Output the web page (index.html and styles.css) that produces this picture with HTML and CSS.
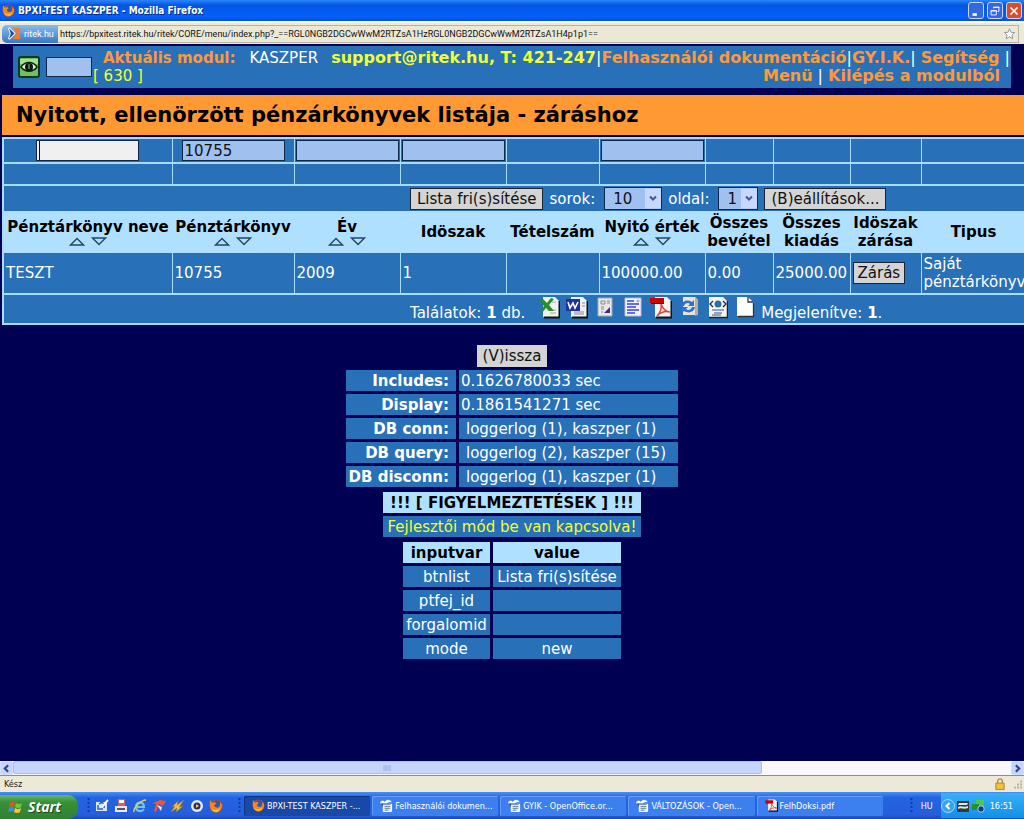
FILE: index.html
```html
<!DOCTYPE html>
<html lang="hu">
<head>
<meta charset="utf-8">
<title>BPXI-TEST KASZPER - Mozilla Firefox</title>
<link rel="stylesheet" href="styles.css">
</head>
<body>
<svg class="defs" aria-hidden="true">
  <defs>
    <symbol id="fox" viewBox="0 0 14 14"><circle cx="7" cy="7" r="6.500" fill="#d8440c"/><circle cx="7.500" cy="5" r="3.800" fill="#3458a8"/><path d="M1 1l2 3 3-1 1 2-2 1 1 2 3 1 2-2V3l2 3c0 5-3 7.500-6 7.500S0 11 1 1z" fill="#f88818"/><path d="M2 9c2 3 6 3 9 0-1 3-3 4-5 3.500S2.500 11 2 9z" fill="#ffd040"/></symbol>
    <symbol id="office" viewBox="0 0 14 14"><path d="M0 4c2-2.500 4-2 5-.5 2-3 6-2.500 7-.5-2-.5-4 .5-5 1.500H4C3 4 1 4 0 4z" fill="#fff" stroke="#fff" stroke-width=".8"/><path d="M3.500 5.500h9v8h-9z" fill="#e8eef8" stroke="#fff"/><path d="M5 8h6M5 10h6M5 12h4" stroke="#507898"/><path d="M2.500 8V5.500h9" stroke="#304868" fill="none"/></symbol>
    <symbol id="pdf" viewBox="0 0 22 23"><path d="M5 1h12l4 4v16H5z" fill="#f4f4f0"/><path d="M6 21.500h15.500V5" stroke="#111" stroke-width="2" fill="none"/><path d="M0 2h14v5H0z" fill="#d00000"/><path d="M1 7h13v1H1z" fill="#400"/><path d="M11 8c2 5 5 8 9 8-4-1-9 0-13 4 3-3 5-7 4-12z" fill="none" stroke="#e04040" stroke-width="1.500"/></symbol>
    <symbol id="up" viewBox="0 0 16 9"><path d="M1.500 8L8 1.500 14.500 8z" fill="none" stroke="#204860" stroke-width="1.400"/></symbol>
    <symbol id="down" viewBox="0 0 16 9"><path d="M1.500 1h13L8 7.500z" fill="none" stroke="#204860" stroke-width="1.400"/></symbol>
  </defs>
</svg>

<header class="titlebar">
  <svg class="i14"><use href="#fox"/></svg>
  <span class="window-title">BPXI-TEST KASZPER - Mozilla Firefox</span>
  <button class="winbtn" aria-label="Minimize"><svg viewBox="0 0 16 16"><path d="M4 12h5" stroke="#fff" stroke-width="3"/></svg></button>
  <button class="winbtn" aria-label="Restore"><svg viewBox="0 0 16 16"><path d="M6.500 5V3.500h6v5H11M6 4h7M3.500 7.500h6v5h-6zM3 8h7" stroke="#fff" fill="none"/></svg></button>
  <button class="winbtn close" aria-label="Close"><svg viewBox="0 0 16 16"><path d="M4 4l8 8M12 4l-8 8" stroke="#fff" stroke-width="2"/></svg></button>
</header>

<div class="urlbar">
  <span class="site"><svg class="i14" viewBox="0 0 14 14"><path d="M1 1l6 6-6 6 2-6z" fill="#fff" stroke="#fff" stroke-width="2"/><path d="M1 1l6 6-6 6 2-6z" fill="#284888"/><path d="M5 1h8v12H5l5-6z" fill="#f87828"/></svg>ritek.hu</span>
  <input class="url" aria-label="URL" value="https://bpxitest.ritek.hu/ritek/CORE/menu/index.php?_==RGL0NGB2DGCwWwM2RTZsA1HzRGL0NGB2DGCwWwM2RTZsA1H4p1p1==">
  <svg class="star" viewBox="0 0 14 14"><path d="M7 1l1.800 4 4.200.3-3.200 2.900 1 4.300L7 10.200l-3.800 2.300 1-4.300L1 5.300 5.200 5z" fill="#fff" stroke="#888"/></svg>
</div>

<main class="page">
  <nav class="module">
    <svg class="eye" viewBox="0 0 22 22"><rect x="1" y="1" width="20" height="20" rx="2" fill="#70c060" stroke="#103818" stroke-width="2"/><path d="M2 3h18v5H2z" fill="#a0e090"/><path d="M3 11c4-6 12-6 16 0-4 5.500-12 5.500-16 0z" fill="#d8f0d0" stroke="#102010" stroke-width="1.500"/><circle cx="11" cy="11" r="4" fill="#081808"/><path d="M11 8v5" stroke="#90c080"/></svg>
    <input class="field code" aria-label="Modul">
    <div class="current">
      <div class="indent"><b class="orange">Aktuális modul:</b>KASZPER</div>
      <div class="yellow">[ 630 ]</div>
    </div>
    <div class="links">
      <div><b class="yellow">support@ritek.hu, T: 421-247</b>|<a href="#">Felhasználói dokumentáció</a>|<a href="#">GY.I.K.</a>| <a href="#">Segítség</a> |</div>
      <div class="second"><a href="#">Menü</a> | <a href="#">Kilépés a modulból</a></div>
    </div>
  </nav>

  <h1>Nyitott, ellenörzött pénzárkönyvek listája - záráshoz</h1>

  <div class="scroller">
  <table class="list">
    <colgroup><col class="w169"><col class="w122"><col class="w106"><col class="w106"><col class="w93"><col class="w106"><col class="w68"><col class="w77"><col class="w71"><col class="w106"></colgroup>
    <tbody>
    <tr class="filters">
      <td><input class="field active" aria-label="Pénztárkönyv neve"></td>
      <td><input class="field" aria-label="Pénztárkönyv" value="10755"></td>
      <td><input class="field" aria-label="Év"></td>
      <td><input class="field" aria-label="Idöszak"></td>
      <td></td>
      <td><input class="field" aria-label="Nyitó érték"></td>
      <td></td><td></td><td></td><td></td>
    </tr>
    <tr class="blank"><td></td><td></td><td></td><td></td><td></td><td></td><td></td><td></td><td></td><td></td></tr>
    <tr class="tools"><td colspan="10"><div class="toolrow">
      <button class="btn">Lista fri(s)sítése</button>
      <label for="rows">sorok:</label>
      <span class="pick"><select id="rows"><option>10</option></select><svg viewBox="0 0 16 20"><path d="M0 0h16v20H0z" fill="#c8d8fc"/><path d="M5 8l3 3 3-3" stroke="#405890" stroke-width="2" fill="none"/></svg></span>
      <label for="pg">oldal:</label>
      <span class="pick small"><select id="pg"><option>1</option></select><svg viewBox="0 0 16 20"><path d="M0 0h16v20H0z" fill="#c8d8fc"/><path d="M5 8l3 3 3-3" stroke="#405890" stroke-width="2" fill="none"/></svg></span>
      <button class="btn">(B)eállítások...</button>
    </div></td></tr>
    <tr class="heads">
      <th>Pénztárkönyv neve<span class="sort"><svg><use href="#up"/></svg><svg><use href="#down"/></svg></span></th>
      <th>Pénztárkönyv<span class="sort"><svg><use href="#up"/></svg><svg><use href="#down"/></svg></span></th>
      <th>Év<span class="sort"><svg><use href="#up"/></svg><svg><use href="#down"/></svg></span></th>
      <th>Idöszak</th>
      <th>Tételszám</th>
      <th>Nyitó érték<span class="sort"><svg><use href="#up"/></svg><svg><use href="#down"/></svg></span></th>
      <th>Összes<br>bevétel</th>
      <th>Összes<br>kiadás</th>
      <th>Idöszak<br>zárása</th>
      <th>Tipus</th>
    </tr>
    <tr class="data">
      <td>TESZT</td><td>10755</td><td>2009</td><td>1</td><td></td><td>100000.00</td><td>0.00</td><td>25000.00</td>
      <td><button class="btn">Zárás</button></td><td>Saját<br>pénztárkönyv</td>
    </tr>
    <tr class="foot"><td colspan="10"><div class="footrow">
      <span class="found">Találatok: <b>1</b> db.</span>
      <span class="exports">
        <svg viewBox="0 0 22 23"><path d="M5 1h12l4 4v16H5z" fill="#f0f0ec"/><path d="M6 21.500h15.500V5" stroke="#111" stroke-width="2" fill="none"/><path d="M10 14h8M12 17h6M14 6h4" stroke="#aaa"/><path d="M0 3h5l4 4 4-5 3 1-5 6 5 6h-5l-3-3-4 5-2-1 4-6z" fill="#289028"/></svg>
        <svg viewBox="0 0 22 23"><path d="M5 1h12l4 4v16H5z" fill="#f0f0ec"/><path d="M6 21.500h15.500V5" stroke="#111" stroke-width="2" fill="none"/><path d="M8 16h10M8 18h10M16 7h3M16 10h3" stroke="#889"/><path d="M0 3h14v12H0z" fill="#2030a0"/><path d="M2 6l2 6 3-5 2 5 3-6" stroke="#fff" stroke-width="1.600" fill="none"/></svg>
        <svg viewBox="0 0 22 23"><path d="M4 2h14v18H4z" fill="#e8e8e8" stroke="#aaa"/><path d="M7 5h4v3H7zM13 5h3M13 7h3M7 11h3M7 13h3M7 16h2" stroke="#888" fill="none"/><path d="M10 17h6v-6z" fill="#402890"/></svg>
        <svg viewBox="0 0 22 23"><path d="M3 2h16v18H3z" fill="#f4f4ff" stroke="#bbc"/><path d="M5 5h7M5 8h12M5 11h9M5 14h12M5 17h8" stroke="#3040f0" stroke-width="1.400"/><circle cx="16" cy="5" r="1.500" fill="#aac"/></svg>
        <svg><use href="#pdf"/></svg>
        <svg viewBox="0 0 22 23"><path d="M5 1h12l3 3v15H5z" fill="#e8e4d8"/><path d="M17 1l3 3v15l-3 1z" fill="#b8b0a0"/><path d="M3 10c1-5 6-7 11-4l2-2v6h-6l2-2c-2-2-5-1-6 2zM17 11c-1 5-6 7-11 4l-2 2v-6h6l-2 2c2 2 5 1 6-2z" fill="#3070d0"/></svg>
        <svg viewBox="0 0 22 23"><path d="M3 1h14l4 4v16H3z" fill="#f4f4f0"/><path d="M3 21.500h18.500V5" stroke="#222" stroke-width="1.500" fill="none"/><circle cx="12" cy="8" r="3.500" fill="#2870a0"/><path d="M7 5L4 8l3 3M17 5l3 3-3 3" stroke="#224" fill="none" stroke-width="1.300"/><path d="M6 14h12M8 17h8M6 19h9" stroke="#3050a0"/></svg>
        <svg viewBox="0 0 22 23"><path d="M3 1h11l5 5v14H3z" fill="#fff"/><path d="M4 20.500h15.500V7M14 1v5h5" stroke="#333" fill="none" stroke-width="1.300"/></svg>
      </span>
      <span class="shown">Megjelenítve: <b>1</b>.</span>
    </div></td></tr>
    </tbody>
  </table>
  </div>

  <section class="debug">
    <button class="btn back">(V)issza</button>
    <table class="grid timing">
      <tr><th>Includes:</th><td>0.1626780033 sec</td></tr>
      <tr><th>Display:</th><td>0.1861541271 sec</td></tr>
      <tr><th>DB conn:</th><td class="inset">loggerlog (1), kaszper (1)</td></tr>
      <tr><th>DB query:</th><td class="inset">loggerlog (2), kaszper (15)</td></tr>
      <tr><th>DB disconn:</th><td class="inset">loggerlog (1), kaszper (1)</td></tr>
    </table>
    <table class="grid warn">
      <tr><th>!!! [ FIGYELMEZTETÉSEK ] !!!</th></tr>
      <tr><td class="yellow">Fejlesztői mód be van kapcsolva!</td></tr>
    </table>
    <table class="grid vars">
      <tr><th>inputvar</th><th>value</th></tr>
      <tr><td>btnlist</td><td>Lista fri(s)sítése</td></tr>
      <tr><td>ptfej_id</td><td></td></tr>
      <tr><td>forgalomid</td><td></td></tr>
      <tr><td>mode</td><td>new</td></tr>
    </table>
  </section>
</main>

<div class="hscroll">
  <button aria-label="Balra"><svg viewBox="0 0 10 10"><path d="M6.500 2l-3 3 3 3" stroke="#304878" stroke-width="2" fill="none"/></svg></button>
  <div class="track"><div class="thumb"><svg viewBox="0 0 8 6"><path d="M1 0v6M3 0v6M5 0v6M7 0v6" stroke="#98b0e8"/></svg></div></div>
  <button aria-label="Jobbra"><svg viewBox="0 0 10 10"><path d="M3.500 2l3 3-3 3" stroke="#304878" stroke-width="2" fill="none"/></svg></button>
</div>
<div class="status"><span>Kész</span>
  <svg class="lock" viewBox="0 0 10 13"><path d="M2.500 6V3.500a2.500 2.500 0 015 0V6" stroke="#b89030" stroke-width="1.500" fill="none"/><path d="M.5 5.500h9v7h-9z" fill="#f0c040" stroke="#b08020"/></svg>
  <svg class="grip" viewBox="0 0 9 9"><path d="M7 1h2v2H7zM4 4h2v2H4zM7 4h2v2H7zM1 7h2v2H1zM4 7h2v2H4zM7 7h2v2H7z" fill="#b8b4a0"/></svg>
</div>

<footer class="taskbar">
  <button class="start"><svg viewBox="0 0 16 15"><path d="M2 3q3-2 5 0L6 7Q4 5 1 7z" fill="#f05020"/><path d="M8 3q3 2 6 0l-1 4q-3 2-6 0z" fill="#70c838"/><path d="M1 8q3-2 5 0l-1 4q-2-2-5 0z" fill="#4888f0"/><path d="M7 8q3 2 6 0l-1 4q-3 2-6 0z" fill="#f8c828"/></svg>Start</button>
  <svg class="dots" viewBox="0 0 3 18"><path d="M1.500 1v16" stroke="#1838a0" stroke-width="2" stroke-dasharray="2 2"/></svg>
  <div class="quick">
    <svg viewBox="0 0 14 14"><path d="M1 3h11v9H1z" fill="#d8e8f8"/><path d="M4 5c4-3 6 0 5 4M3 6v4h5" stroke="#2860b0" stroke-width="1.500" fill="none"/><path d="M7 8l6-7" stroke="#fff" stroke-width="2"/></svg>
    <svg viewBox="0 0 14 14"><path d="M4 0h7v7H4z" fill="#d86060"/><path d="M5 1h5v3H5z" fill="#fff"/><path d="M1 7h12v6H1z" fill="#e8e8f4"/><path d="M3 10h8" stroke="#556" stroke-width="2"/></svg>
    <svg viewBox="0 0 14 14"><path d="M3 8h8c0-6-8-6-8 0 0 5 6 5 8 2" stroke="#68c8f8" stroke-width="2.200" fill="none"/><path d="M1 13C0 9 8 1 13 1" stroke="#f8c840" stroke-width="1.500" fill="none"/></svg>
    <svg viewBox="0 0 14 14"><path d="M1 4l7-3 6 1-3 5-4-2-3 8-2-1 2-7z" fill="#e85838"/><path d="M5 6l5 2-1 4z" fill="#e8e8e8"/></svg>
    <svg viewBox="0 0 14 14"><path d="M1 8l6-6-1 4 7-5-5 7 4-1-7 6 1-4-6 4 4-6z" fill="#f8c040" stroke="#a87010" stroke-width=".5"/></svg>
    <svg viewBox="0 0 14 14"><circle cx="7" cy="7" r="6" fill="#e8e8f0"/><circle cx="7" cy="7" r="3.500" fill="#203060"/><path d="M6 5l3 2-3 2z" fill="#f8c860"/></svg>
    <svg><use href="#fox"/></svg>
  </div>
  <svg class="dots" viewBox="0 0 3 18"><path d="M1.500 1v16" stroke="#1838a0" stroke-width="2" stroke-dasharray="2 2"/></svg>
  <div class="tasks">
    <button class="task on"><svg class="i14"><use href="#fox"/></svg>BPXI-TEST KASZPER -...</button>
    <button class="task"><svg class="i14"><use href="#office"/></svg>Felhasználói dokumen...</button>
    <button class="task"><svg class="i14"><use href="#office"/></svg>GYIK - OpenOffice.or...</button>
    <button class="task"><svg class="i14"><use href="#office"/></svg>VÁLTOZÁSOK - Open...</button>
    <button class="task"><svg class="i14"><use href="#pdf"/></svg>FelhDoksi.pdf</button>
  </div>
  <svg class="dots" viewBox="0 0 3 18"><path d="M1.500 1v16" stroke="#1838a0" stroke-width="2" stroke-dasharray="2 2"/></svg>
  <span class="lang">HU</span>
  <div class="tray">
    <svg viewBox="0 0 14 14"><circle cx="7" cy="7" r="6.500" fill="#38a0f0" stroke="#a0d8f8"/><path d="M8.500 4l-3 3 3 3" stroke="#fff" stroke-width="2" fill="none"/></svg>
    <svg viewBox="0 0 14 14"><path d="M1 2h12v11H1z" fill="#303840"/><path d="M3 4h9l-1 2H2zM2 8c3-2 6 1 10-1v2c-4 2-7-1-10 1z" fill="#d8e8e0"/></svg>
    <svg viewBox="0 0 14 14"><path d="M5 1h8v8H5z" fill="#50c850"/><path d="M1 5h7v6H1z" fill="#289028"/><circle cx="10" cy="10" r="3.200" fill="#183880" stroke="#a0d0f0"/></svg>
    <time>16:51</time>
  </div>
</footer>
</body>
</html>
```
FILE: styles.css
```css
* { box-sizing: border-box; }
body { margin: 0; min-height: 100vh; display: flex; flex-direction: column; overflow-x: hidden; background: #000052; color: #fff; font: 15px/18px "DejaVu Sans", Verdana, sans-serif; }
button, input, select { font: inherit; margin: 0; border-radius: 0; }
svg { display: block; flex: none; }
.defs { position: absolute; width: 0; height: 0; }
.i14 { width: 13px; height: 13px; }

.titlebar { display: flex; align-items: center; gap: 3px; height: 21px; padding: 0 2px; background: linear-gradient(#2a86f8, #0455e4 25%, #0460fc 80%, #0450d8); font: bold 10px/14px "DejaVu Sans Condensed", "DejaVu Sans", sans-serif; }
.window-title { flex: 1; text-shadow: 1px 1px #0a2a80; }
.winbtn { width: 16px; height: 17px; padding: 0; border: 1px solid #c8d8fc; border-radius: 3px; background: #3468e0; }
.winbtn.close { background: #dc4c28; }

.urlbar { display: flex; align-items: center; height: 23px; padding: 0 5px 0 2px; background: #ece9d8; border-top: 2px solid #fcfcf8; color: #111; font: 9px/16px Roboto, "DejaVu Sans Condensed", sans-serif; }
.site { display: flex; align-items: center; gap: 3px; width: 56px; height: 18px; padding-left: 6px; border-radius: 5px 0 0 5px; background: linear-gradient(#88bcec, #3878c4); color: #fff; }
.url { flex: 1; min-width: 0; height: 18px; padding: 0 2px; border: 1px solid #b8b4a4; border-width: 1px 0; background: #ebe8d6; color: #111; }
.star { width: 18px; height: 18px; padding: 2px; border: 1px solid #b8b4a4; border-left: 0; }

.page { flex: 1; }
.module { display: flex; align-items: center; margin: 2px 13px 0; height: 42px; padding: 0 1px 0 5px; background: #2870b8; white-space: nowrap; }
.eye { width: 22px; height: 22px; margin-right: 6px; }
.field { width: 103px; height: 21px; padding: 0 2px; border: 1px solid #102848; outline: 0; background: #a0c0f0; color: #111; }
.code { width: 46px; height: 20px; }
.indent { display: flex; gap: 14px; padding-left: 10px; }
.current { padding-left: 1px; }
.orange, .links a { color: #ff9838; font-weight: bold; text-decoration: none; }
.yellow { color: #f0ff30; }
.links { flex: 1; text-align: right; font-size: 16px; }
.second { padding-right: 10px; }

h1 { margin: 7px 0 0 2px; padding: 0 14px; height: 40px; background: #ff9933; color: #000; font: bold 21px/41px "DejaVu Sans", Verdana, sans-serif; white-space: nowrap; overflow: hidden; }

.scroller { margin: 2px 0 0 2px; overflow: hidden; }
.list { width: 100%; min-width: 1026px; table-layout: fixed; border-collapse: collapse; border: 2px solid #a8dcff; background: #2870b8; }
.list td, .list th { padding: 0 2px; border: 1px solid #a8dcff; white-space: nowrap; }
.list td { border-width: 2px 1px; }
.w169 { width: 169px; } .w122 { width: 122px; } .w106 { width: 106px; } .w93 { width: 93px; } .w68 { width: 68px; } .w77 { width: 77px; } .w71 { width: 71px; }
.filters td { height: 25px; padding: 0; text-align: center; }
.filters .field { display: block; margin: 0 auto; }
.filters .active { background: linear-gradient(90deg, #f0f0f0 2px, #111 2px, #111 3px, #f0f0f0 3px); }
.list .blank td { height: 22px; }
.list .tools td { height: 26px; padding: 0; border-bottom: 0; }
.toolrow { display: flex; align-items: center; gap: 6px; padding-left: 406px; }
.btn { height: 22px; padding: 0 6px; border: 1px solid #1c2430; background: #d4d4d4; color: #111; line-height: 18px; white-space: nowrap; }
.data .btn { padding: 0 4px; }
.pick { position: relative; width: 58px; height: 23px; margin-left: 3px; }
.pick select { appearance: none; width: 100%; height: 100%; padding: 0 8px; border: 1px solid #102848; background: #a0c0f0; color: #111; }
.pick svg { position: absolute; right: 1px; top: 1px; width: 16px; height: 21px; pointer-events: none; }
.pick.small { width: 40px; }
.heads th { height: 42px; padding: 0; border: 0; background: #b0e0ff; color: #000; }
.sort { display: flex; justify-content: center; gap: 6px; padding: 1px 0 0; }
.sort svg { width: 16px; height: 9px; }
.list .data td { height: 41px; border-top: 0; }
.list .foot td { height: 30px; padding: 0; }
.footrow { display: flex; align-items: center; padding-left: 406px; height: 28px; }
.found, .shown { padding-top: 7px; }
.exports { display: flex; gap: 6px; padding: 0 5px 0 13px; height: 26px; }
.exports svg { width: 22px; height: 23px; }

.debug { display: flex; flex-direction: column; align-items: center; padding-top: 20px; }
.back { border-color: #d4d4d4; padding: 0 5px; }
.grid { border-spacing: 3px; }
.grid td, .grid th { height: 21px; padding: 0 2px; background: #2870b8; white-space: nowrap; }
.timing th { width: 110px; padding-right: 7px; text-align: right; }
.timing td { width: 219px; }
.timing .inset { padding-left: 7px; }
.warn, .vars { margin-top: -1px; text-align: center; }
.grid.warn { width: 264px; }
.grid.vars { width: 224px; }
.vars th:last-child { width: 128px; }
.warn th, .vars th { background: #b0e0ff; color: #000; }

.hscroll { display: flex; height: 14px; background: #f8f8fc; }
.hscroll button { width: 13px; height: 14px; padding: 0; border: 1px solid #d0dcfc; border-radius: 2px; background: #c4d4fc; }
.track { flex: 1; }
.thumb { display: grid; place-items: center; width: 75%; height: 13px; border: 1px solid #a8bcf0; border-radius: 2px; background: #c4d4fc; }
.thumb svg { width: 8px; height: 6px; }
.status { display: flex; align-items: center; height: 17px; padding: 0 2px 0 4px; background: #ece9d8; border-top: 1px solid #908c80; color: #222; font: 9px/14px "DejaVu Sans Condensed", "DejaVu Sans", sans-serif; }
.status span { flex: 1; }
.lock { width: 10px; height: 12px; margin-right: 8px; }
.grip { width: 9px; height: 12px; }

.taskbar { display: flex; align-items: center; height: 27px; background: linear-gradient(#4890f8, #2464e0 20%, #245edc 85%, #1a48b0); font: 9px/14px "DejaVu Sans Condensed", "DejaVu Sans", sans-serif; }
.start { display: flex; align-items: center; gap: 4px; width: 78px; height: 24px; padding: 0 0 0 8px; align-self: flex-end; border: 0; border-radius: 0 10px 10px 0; background: linear-gradient(#68b868, #389038 30%, #308030); color: #fff; font: italic bold 14px/18px "Open Sans", sans-serif; text-shadow: 1px 1px #184818; }
.start svg { width: 16px; height: 15px; }
.dots { width: 3px; height: 18px; margin-left: 9px; }
.quick { display: flex; gap: 5px; margin: 0 6px 0 5px; }
.quick svg { width: 14px; height: 14px; }
.tasks { display: flex; flex: 1; gap: 2px; margin-left: 3px; padding-right: 18px; min-width: 0; }
.task { display: flex; flex: 1; align-items: center; gap: 2px; min-width: 0; height: 20px; padding: 0 0 0 8px; border: 0; border-radius: 2px; background: #3c80f0; box-shadow: inset 1px 1px #689cf8; color: #fff; white-space: nowrap; overflow: hidden; }
.task.on { background: #1848a8; box-shadow: inset 1px 1px #103480; }
.lang { padding: 0 8px; }
.tray { display: flex; align-items: center; gap: 1px; height: 25px; padding-right: 11px; background: linear-gradient(#38b0f8, #1090e8); }
.tray svg { width: 14px; height: 14px; }
.tray time { padding-left: 4px; }
```
